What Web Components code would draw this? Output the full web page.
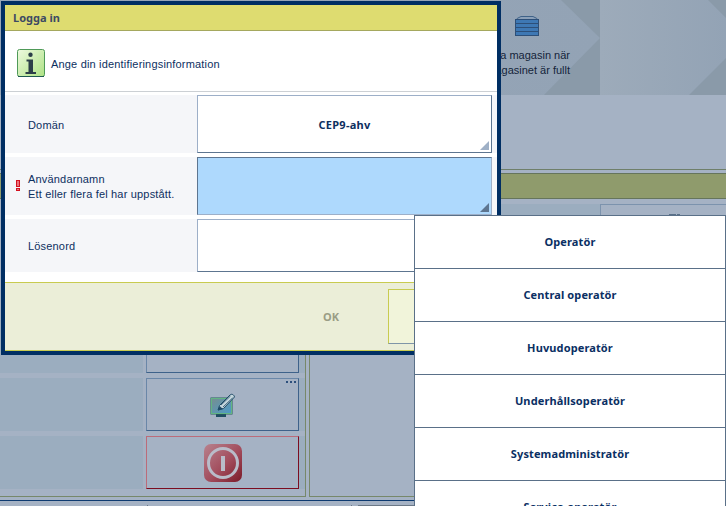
<!DOCTYPE html>
<html lang="sv"><head><meta charset="utf-8"><title>Logga in</title>
<style>
html,body{margin:0;padding:0;width:726px;height:506px;overflow:hidden;background:#a5b2c4;font:11px "Liberation Sans",sans-serif;letter-spacing:.18px;color:#0d2f5f}
</style></head><body>
<x-app></x-app>
<script>
function def(name,css,html){
  customElements.define(name,class extends HTMLElement{
    constructor(){super();this.attachShadow({mode:'open'}).innerHTML='<style>'+css+'</style>'+html;}
  });
}
const BOLD='"Noto Sans","Liberation Sans",sans-serif';
/* ---------- icons ---------- */
const ICON_INFO=`<svg width="28" height="28" viewBox="0 0 28 28"><defs><linearGradient id="g" x1="0" y1="0" x2="1" y2="1"><stop offset="0" stop-color="#eefadf"/><stop offset="1" stop-color="#aee284"/></linearGradient></defs><rect x=".5" y=".5" width="27" height="27" rx="2" fill="url(#g)" stroke="#4f9a58"/><path d="M1 27.500h26" stroke="#1f5a50"/><circle cx="13.500" cy="5.800" r="2.200" fill="#2c3f48"/><path d="M9.500 10.500h6.500v12.500h3v2h-10.500v-2h3V12.500H9.500z" fill="#2c3f48"/></svg>`;
const ICON_STACK=`<svg width="24" height="21" viewBox="0 0 24 21"><path d="M1 5Q1 2 6 .5h12Q23 2 23 5" fill="#8ba0b8" stroke="#3f6288"/><g fill="#3e78b4"><rect x="1" y="4" width="22" height="3"/><rect x="1" y="8" width="22" height="3"/><rect x="1" y="12" width="22" height="3"/><rect x="1" y="16" width="22" height="3"/></g><path d="M0 3.500h24M0 7.500h24M0 11.500h24M0 15.500h24M0 19.500h24" stroke="#2d4f78"/><path d="M.5 3v17M23.500 3v17" stroke="#2d4f78"/></svg>`;
const ICON_EDIT=`<svg width="25" height="24" viewBox="0 0 25 24"><defs><linearGradient id="m" x1="0" y1="0" x2="1" y2="1"><stop offset="0" stop-color="#768f90"/><stop offset="1" stop-color="#4c9ac8"/></linearGradient></defs><rect x="6" y="21" width="10" height="3" fill="#1f4c62"/><rect x=".5" y="4.500" width="22" height="17" fill="#2a5c60"/><rect x="1.500" y="5.500" width="20" height="15" fill="url(#m)" stroke="#62b482"/><path d="M8 17l1.500-4.500L20 2c1.500-1.500 4-.5 4.500 2L13.500 15.500z" fill="#c4d6dc" stroke="#1e4a66"/><path d="M8 17.500l1.500-4.500 3.500 3z" fill="#1e4a66"/><path d="M11 12L20.500 3M13 14L22.500 5" stroke="#1e4a66" stroke-width=".8"/></svg>`;
const ICON_POWER=`<svg width="38" height="38" viewBox="0 0 38 38"><defs><linearGradient id="r" x1="0" y1="0" x2="1" y2="1"><stop offset="0" stop-color="#b8828e"/><stop offset=".55" stop-color="#a24c5c"/><stop offset="1" stop-color="#7b1a28"/></linearGradient></defs><rect width="38" height="38" rx="7" fill="url(#r)"/><circle cx="19" cy="19" r="14.500" fill="none" stroke="#b9bcc9" stroke-width="3"/><rect x="17" y="12" width="4" height="15" fill="#b9bcc9"/></svg>`;
const ICON_ALERT=`<svg width="4" height="11" viewBox="0 0 4 11"><rect width="4" height="7" fill="#d4101f"/><rect y="8" width="4" height="3" fill="#d4101f"/><rect x="1" y="1" width="2" height="5" fill="#e8747c"/><rect x="1" y="9" width="2" height="1" fill="#e8747c"/></svg>`;

/* ---------- background ---------- */
def('x-tile',`:host{display:flex;flex-direction:column;align-items:flex-end;position:relative;height:95px;width:600px;background:linear-gradient(90deg,#97a6b8,#93a3b5);box-sizing:border-box;padding:16px 30px 0 0;color:#14243a;font-size:11px;line-height:15px;letter-spacing:0;overflow:hidden}
svg.tri{position:absolute;inset:0}
.ic{height:21px;margin:0 31px 11px 0;position:relative}.t{position:relative;white-space:nowrap}`,
`<svg class="tri" width="600" height="95"><path d="M561 0L600 38V0zM600 38L544 95H600z" fill="#8a9aa9"/></svg><div class="ic">${ICON_STACK}</div><div class="t">Byta magasin när</div><div class="t">magasinet är fullt</div>`);
def('x-tile2',`:host{display:block;position:relative;height:95px;flex:1;background:linear-gradient(90deg,#9dabba,#93a3b5)}svg{position:absolute;inset:0}`,
`<svg width="126" height="95"><path d="M108 0L126 18V0zM126 58L89 95H126z" fill="#8a9aa9"/></svg>`);
def('x-btn',`:host{display:flex;align-items:center;justify-content:center;position:relative;box-sizing:border-box;width:153px;height:53px;background:#a5b2c4;border:1px solid;border-color:#6a87a8 #3e628a #3e628a #6a87a8}
:host([danger]){border-color:#bb6c7a #7c0d20 #7c0d20 #bb6c7a}
.more{position:absolute;top:2px;right:2px;display:none;gap:2px}
:host([more]) .more{display:flex}.more i{width:2px;height:2px;background:#2c4f7c}`,
`<div class="more"><i></i><i></i><i></i></div><slot></slot>`);
def('x-strip-row',`:host{display:block;height:53px;padding-left:146px;background:linear-gradient(90deg,#9badbf 143px,#a5b2c4 143px,#a5b2c4 299px,#9badbf 299px)}`,`<slot></slot>`);
def('x-backdrop',`:host{display:block;width:726px;height:506px;background:#a5b2c4;overflow:hidden}
.top{display:flex}
.mid{height:75px;box-sizing:border-box;border-bottom:1px solid #6f7f6a}
.bar{margin-top:3px;height:26px;box-sizing:border-box;background:#8f9b6c;border:solid #66755c;border-width:1px 0}
.low{display:flex;height:298px}
.left{width:306px;height:298px;box-sizing:border-box;border:solid #77886a;border-width:0 1px 1px 0}
.stack{display:flex;flex-direction:column;gap:5px;padding-top:121px}
.right{flex:1;height:298px;box-sizing:border-box;border:solid #77886a;border-width:0 0 1px 1px;margin-left:3px;padding-top:5px;display:flex}
.strip{width:290px;height:120px;background:#9badbf}
.card{flex:1;height:60px;box-sizing:border-box;border:solid #7c93ad;border-width:1px 0 0 1px;padding:9px 0 0 68px}
.stub{display:flex;gap:1px}.stub i{height:2px;background:#5a7088}.stub i:first-child{width:7px}.stub i:last-child{width:3px}
.foot{border-top:1px solid #0d3a70;margin-top:3px;height:6px;box-sizing:border-box;display:flex;align-items:flex-end}
.foot i{height:1px;background:#6b7887;display:block}`,
`<div class="top"><x-tile></x-tile><x-tile2></x-tile2></div>
<div class="mid"></div><div class="bar"></div>
<div class="low"><div class="left"><div class="stack">
<x-strip-row><x-btn></x-btn></x-strip-row>
<x-strip-row><x-btn more>${ICON_EDIT}</x-btn></x-strip-row>
<x-strip-row><x-btn danger>${ICON_POWER}</x-btn></x-strip-row>
</div></div><div class="right"><div class="strip"></div><div class="card"><div class="stub"><i></i><i></i></div></div></div></div>
<div class="foot"><i style="width:1px;margin-left:147px"></i><i style="width:1px;margin-left:203px"></i><i style="flex:1;margin-left:6px"></i></div>`);

/* ---------- dialog ---------- */
def('x-row',`:host{display:flex;position:relative;height:58px;background:#f5f6f9;padding-right:5px;box-sizing:border-box}
:host([short]){height:53px}
.label{width:192px;box-sizing:border-box;padding:2px 0 0 23px;display:flex;flex-direction:column;justify-content:center;line-height:15px}
.err{display:none;position:absolute;left:11px;top:23px;line-height:0}
:host([error]) .err{display:block}
.field{flex:1;box-sizing:border-box;border:1px solid;border-color:#9dafc8 #5d7590 #5d7590 #9dafc8;background:#fff;display:flex;align-items:center;justify-content:center;font:700 11px ${BOLD};letter-spacing:.25px;position:relative}
:host([error]) .field{background:#aed9fd;border-color:#5d7590 #9dafc8 #9dafc8 #5d7590}
.tri{position:absolute;right:2px;bottom:2px;width:9px;height:9px;background:#9fb0c6;clip-path:polygon(100% 0,100% 100%,0 100%)}
:host([error]) .tri{background:#5d7590}`,
`<div class="err">${ICON_ALERT}</div><div class="label"><slot name="label"></slot></div><div class="field"><slot></slot><span class="tri"></span></div>`);
def('x-dialog',`:host{display:block;position:absolute;left:1px;top:1px;width:500px;height:354px;box-sizing:border-box;border:4px solid #002e63;background:#fff}
.title{height:26px;box-sizing:border-box;background:#dedc70;border-bottom:1px solid #a5a85e;padding-left:8px;font:700 11px/25px ${BOLD};letter-spacing:0;color:#3d4a63}
.msg{height:61px;display:flex;align-items:center;gap:6px;padding:4px 0 0 12px;border-bottom:1px solid #ccd0d4;box-sizing:border-box}
.msg span{padding-top:2px}
.rows{display:flex;flex-direction:column;gap:4px;margin-top:3px}
.foot{position:absolute;left:0;right:0;bottom:0;height:69px;box-sizing:border-box;background:#ebeed8;border:solid #c8cb50;border-width:1px 0;display:flex;padding:6px 9px 0 0;justify-content:flex-end}
.ok{width:114px;height:54px;display:flex;align-items:center;justify-content:center;font:700 11px ${BOLD};letter-spacing:0;color:#9a9d85}
.cancel{width:100px;height:55px;box-sizing:border-box;background:#f1f4da;border:1px solid;border-color:#c8cb50 #7f95a8 #7f95a8 #c8cb50}`,
`<div class="title">Logga in</div>
<div class="msg">${ICON_INFO}<span>Ange din identifieringsinformation</span></div>
<div class="rows">
<x-row><span slot="label">Domän</span>CEP9-ahv</x-row>
<x-row error><span slot="label">Användarnamn</span><span slot="label">Ett eller flera fel har uppstått.</span></x-row>
<x-row short><span slot="label">Lösenord</span></x-row>
</div>
<div class="foot"><div class="ok">OK</div><div class="cancel"></div></div>`);

/* ---------- role menu ---------- */
def('x-item',`:host{display:flex;flex:none;align-items:center;justify-content:center;height:53px;box-sizing:border-box;border-top:1px solid #5a7088;padding-bottom:2px;font:700 11px ${BOLD};letter-spacing:.12px;color:#0a2f63;background:#fff}`,`<slot></slot>`);
def('x-menu',`:host{display:flex;flex-direction:column;position:absolute;left:414px;top:215px;width:312px;height:291px;box-sizing:border-box;border:solid #5a7088;border-width:0 1px;overflow:hidden;background:#fff}`,`<slot></slot>`);

def('x-app',`:host{display:block;position:relative;width:726px;height:506px;overflow:hidden}`,
`<x-backdrop></x-backdrop><x-dialog></x-dialog>
<x-menu><x-item>Operatör</x-item><x-item>Central operatör</x-item><x-item>Huvudoperatör</x-item><x-item>Underhållsoperatör</x-item><x-item>Systemadministratör</x-item><x-item>Service-operatör</x-item></x-menu>`);
</script>
</body></html>
